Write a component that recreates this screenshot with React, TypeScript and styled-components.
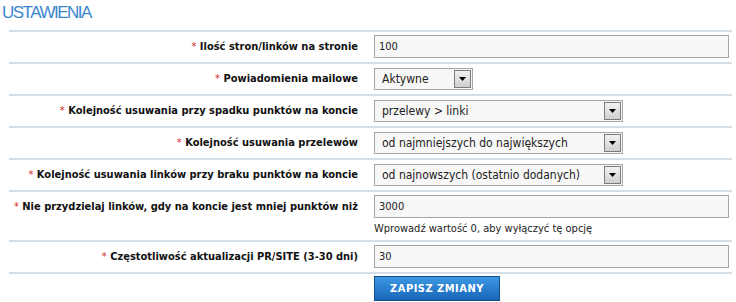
import React from 'react'
import styled, { createGlobalStyle } from 'styled-components'

const GlobalStyle = createGlobalStyle`
    body {
        margin: 0;
        background: #ffffff;
        font-family: "DejaVu Sans Condensed", "DejaVu Sans", sans-serif;
    }
`

interface Field {
    label: string
    kind: 'input' | 'select'
    value: string
    width?: number
    hint?: string
}

const fields: Field[] = [
    { label: 'Ilość stron/linków na stronie', kind: 'input', value: '100' },
    { label: 'Powiadomienia mailowe', kind: 'select', value: 'Aktywne', width: 99 },
    { label: 'Kolejność usuwania przy spadku punktów na koncie', kind: 'select', value: 'przelewy > linki', width: 249 },
    { label: 'Kolejność usuwania przelewów', kind: 'select', value: 'od najmniejszych do największych', width: 249 },
    { label: 'Kolejność usuwania linków przy braku punktów na koncie', kind: 'select', value: 'od najnowszych (ostatnio dodanych)', width: 249 },
    { label: 'Nie przydzielaj linków, gdy na koncie jest mniej punktów niż', kind: 'input', value: '3000', hint: 'Wprowadź wartość 0, aby wyłączyć tę opcję' },
    { label: 'Częstotliwość aktualizacji PR/SITE (3-30 dni)', kind: 'input', value: '30' },
]

export default () => {
    return (
        <>
            <GlobalStyle />
            <Page>
                <Title>USTAWIENIA</Title>
                <Table>
                    {fields.map((f, i) => (
                        <Row key={i}>
                            <Label>
                                <Star>*</Star> {f.label}
                            </Label>
                            <Cell>
                                {f.kind === 'input' ? (
                                    <TextInput defaultValue={f.value} />
                                ) : (
                                    <SelectBox width={f.width ?? 249}>
                                        <NativeSelect defaultValue={f.value}>
                                            <option>{f.value}</option>
                                        </NativeSelect>
                                        <ArrowButton>
                                            <svg width="7" height="4" viewBox="0 0 7 4">
                                                <path d="M0 0 H7 L3.5 4 Z" fill="#000" />
                                            </svg>
                                        </ArrowButton>
                                    </SelectBox>
                                )}
                                {f.hint && <Hint>{f.hint}</Hint>}
                            </Cell>
                        </Row>
                    ))}
                    <ButtonRow>
                        <SaveButton>ZAPISZ ZMIANY</SaveButton>
                    </ButtonRow>
                </Table>
            </Page>
        </>
    )
}

const Page = styled.div`
    width: 736px;
    padding: 4px 0 0 0;
`

const Title = styled.h1`
    margin: 0 0 0 2px;
    height: 26px;
    font-family: "Liberation Sans", Arial, sans-serif;
    font-weight: normal;
    font-size: 17px;
    line-height: 18px;
    letter-spacing: -1.5px;
    color: #3a87cd;
`

const Table = styled.div`
    margin-left: 9px;
    width: 723px;
    border-top: 2px solid #d3dee6;
`

const Row = styled.div`
    display: grid;
    grid-template-columns: 365px 1fr;
    align-items: start;
    padding: 3px 0 4px;
    border-bottom: 2px solid #d3dee6;
`

const Label = styled.div`
    padding-right: 16px;
    text-align: right;
    font-size: 11px;
    font-weight: bold;
    line-height: 23px;
    color: #111;
    white-space: nowrap;
`

const Star = styled.span`
    color: #d8262a;
    font-weight: normal;
`

const Cell = styled.div`
    padding-right: 3px;
    display: flex;
    flex-direction: column;
`

const TextInput = styled.input`
    box-sizing: border-box;
    width: 100%;
    height: 23px;
    margin: 0;
    padding: 0 4px;
    border: 1px solid #a6a6a6;
    background: #f7f7f7;
    font-family: "DejaVu Sans Condensed", "DejaVu Sans", sans-serif;
    font-size: 11px;
    color: #222;
    outline: none;
`

const SelectBox = styled.div<{ width: number }>`
    box-sizing: border-box;
    display: flex;
    align-items: center;
    width: ${props => props.width}px;
    height: 22px;
    margin-top: 1px;
    padding: 1px;
    border: 1px solid #a6a6a6;
    background: #f7f7f7;
`

const NativeSelect = styled.select`
    flex: 1;
    min-width: 0;
    height: 100%;
    padding: 0 0 0 6px;
    border: none;
    background: transparent;
    appearance: none;
    font-family: "DejaVu Sans Condensed", "DejaVu Sans", sans-serif;
    font-size: 12px;
    color: #222;
    outline: none;
`

const ArrowButton = styled.span`
    box-sizing: border-box;
    display: flex;
    align-items: center;
    justify-content: center;
    width: 17px;
    height: 18px;
    border: 1px solid #7b7b7b;
    background: linear-gradient(#f2f2f2, #cfcfcf);
`

const Hint = styled.div`
    margin-top: 4px;
    font-size: 11px;
    line-height: 14px;
    color: #222;
`

const ButtonRow = styled.div`
    padding: 2px 0 0 365px;
`

const SaveButton = styled.button`
    box-sizing: border-box;
    width: 126px;
    height: 25px;
    border: 1px solid #0f4f8c;
    background: linear-gradient(#3e98e2 0%, #2a7fd0 50%, #1966b6 100%);
    color: #fff;
    font-family: "DejaVu Sans Condensed", "DejaVu Sans", sans-serif;
    font-size: 11px;
    font-weight: bold;
    letter-spacing: 0.5px;
    cursor: pointer;
`
